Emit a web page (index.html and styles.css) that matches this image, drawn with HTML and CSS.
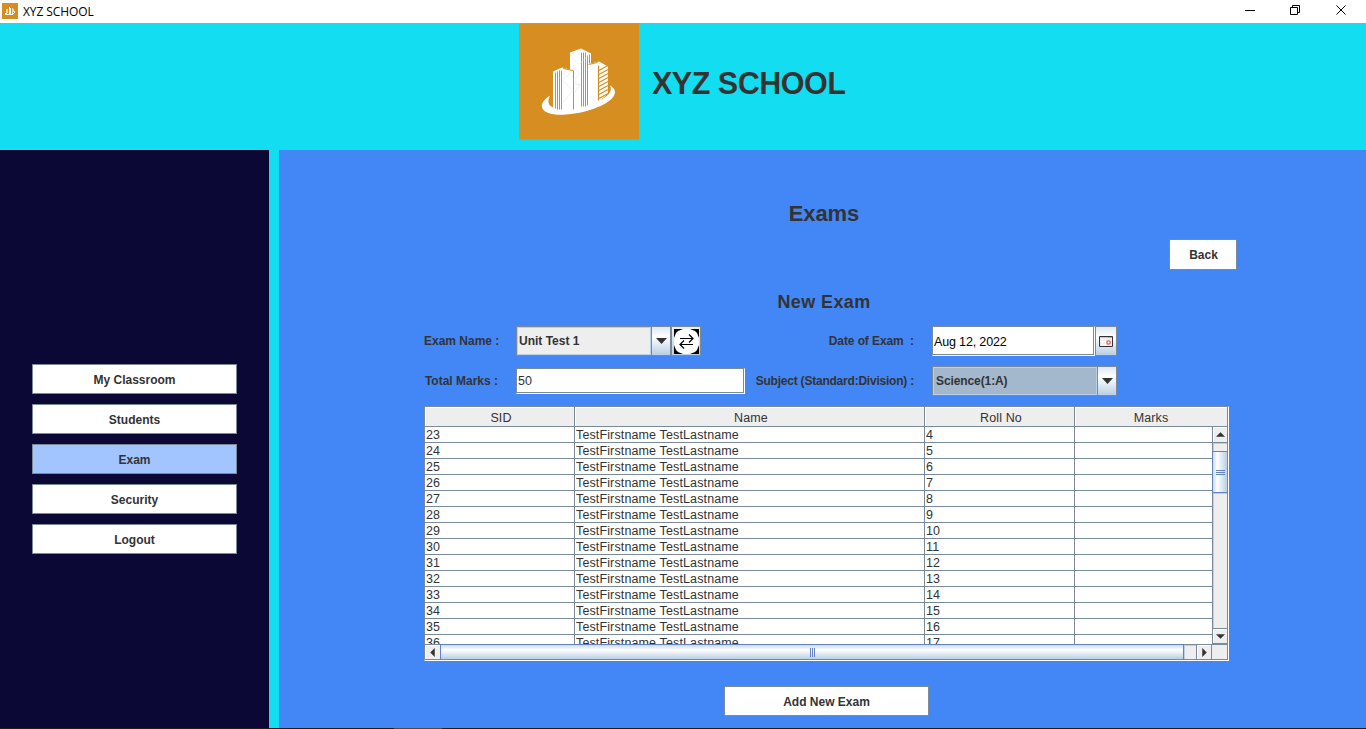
FILE: index.html
```html
<!DOCTYPE html>
<html lang="en">
<head>
<meta charset="utf-8">
<title>XYZ SCHOOL</title>
<link rel="stylesheet" href="styles.css">
</head>
<body>
<svg width="0" height="0" class="defs">
  <symbol id="skyline" viewBox="0 0 120 116">
    <rect width="120" height="116" fill="#d58e1f"/>
    <path fill="#fff" d="M34 48l9-4 8 2V29l11-4 10 5v10l8-2 9 5v27l-9 8-9 8-37 2z"/>
    <path fill="#fff" d="M31 72c-6 4-9 8-8 12 2 6 12 8 24 7 18-1 37-8 45-15 5-5 6-10-1-14 3 6-2 11-11 15-12 5-30 9-42 8-7-1-11-5-7-13z"/>
    <path fill="none" stroke="#d58e1f" stroke-width="1" d="M36.500 49v36M38.500 48v38M40.500 47v39M42.500 47v39M62.500 29v54M64.500 29v54M66.500 29v54M68.500 32v50M54.500 47v39M70.500 31v9M44 45l10 2M69.500 41l9-2"/>
    <path fill="none" stroke="#d58e1f" stroke-width="1.200" d="M79.500 42v35M80 47l9-5M80 51l9-5M80 55l9-5M80 59l9-5M80 63l9-5M80 67l9-5M80 71l9-5M80 75l9-5"/>
    <path fill="none" stroke="#e5e5e5" stroke-width=".6" d="M52 33l8 8 8-8M44 57l10 10-10 12M54 43l7 7-7 7M70 49l8-8M56 69l5-8M70 72l8 8M45 55l8-7M56 61h5M57 58v3M60 59v3"/>
  </symbol>
</svg>

<header class="titlebar">
  <svg class="app-icon" viewBox="0 0 16 16" shape-rendering="crispEdges"><rect width="16" height="16" fill="#d58e1f"/><path fill="#fff" d="M3 10h2v2H3zM7 4h1v7H7zM8 5h1v6H8zM4 11h7v1H4zM10 10h2v1h-2zM12 8h1v2h-1z"/><path fill="#f1d9ad" d="M4 6h2v4H4zM10 5h1v5h-1zM11 6h1v3h-1z"/></svg>
  <span class="app-name">XYZ SCHOOL</span>
  <svg class="window-controls" viewBox="0 0 110 23" fill="none" stroke="#000"><path d="M5 10.500h10M50.500 7.500h7v7h-7zM52.500 7.500v-2h7v7h-2"/><path d="M96.500 5.500l9 9M105.500 5.500l-9 9"/></svg>
</header>

<section class="banner">
  <svg class="logo"><use href="#skyline"/></svg>
  <h1>XYZ SCHOOL</h1>
</section>

<div class="body">
  <nav class="sidebar">
    <button class="btn">My Classroom</button>
    <button class="btn">Students</button>
    <button class="btn active">Exam</button>
    <button class="btn">Security</button>
    <button class="btn">Logout</button>
  </nav>

  <main class="main">
    <h2>Exams</h2>
    <button class="btn back">Back</button>
    <h3>New Exam</h3>

    <div class="form">
      <label>Exam Name :</label>
      <div class="field-group">
        <div class="combo exam-combo"><span>Unit Test 1</span><i class="drop"><svg viewBox="0 0 11 6"><path d="M0 0h11L5.500 6z"/></svg></i></div>
        <div class="swap"><svg viewBox="0 0 25 25"><rect width="25" height="25" fill="#000"/><path fill="#fff" d="M9 0h7l5 2 2 2 2 5v7l-2 5-2 2-5 2H9l-5-2-2-2-2-5V9l2-5 2-2z"/><path fill="none" stroke="#000" stroke-width="1.200" d="M6 9.500h13M15 5.500l4 4-4 4M19 15.500H6M10 11.500l-4 4 4 4"/></svg></div>
      </div>
      <label class="date-label">Date of Exam&nbsp; :</label>
      <div class="field-group">
        <div class="input date">Aug 12, 2022</div>
        <div class="calendar"><svg viewBox="0 0 14 11"><path fill="#eee" stroke="#333" d="M.5.500h13v10H.5z"/><path stroke="#f2c27c" d="M1 1.500h8"/><path stroke="#9cb6dc" d="M9 1.500h4"/><path stroke="#fff" d="M3.500 3v7M6.500 3v7M1 5.500h6"/><circle cx="9.500" cy="6.500" r="1.700" fill="#fff" stroke="#ec6060" stroke-width="1.300"/></svg></div>
      </div>
      <label>Total Marks :</label>
      <div class="input marks">50</div>
      <label class="subject-label">Subject (Standard:Division) :</label>
      <div class="combo subject-combo"><span>Science(1:A)</span><i class="drop"><svg viewBox="0 0 11 6"><path d="M0 0h11L5.500 6z"/></svg></i></div>
    </div>

    <div class="grid">
      <div class="row head"><span>SID</span><span>Name</span><span>Roll No</span><span>Marks</span></div>
      <div class="viewport">
        <div class="rows">
          <div class="row"><span>23</span><span>TestFirstname TestLastname</span><span>4</span><span></span></div>
          <div class="row"><span>24</span><span>TestFirstname TestLastname</span><span>5</span><span></span></div>
          <div class="row"><span>25</span><span>TestFirstname TestLastname</span><span>6</span><span></span></div>
          <div class="row"><span>26</span><span>TestFirstname TestLastname</span><span>7</span><span></span></div>
          <div class="row"><span>27</span><span>TestFirstname TestLastname</span><span>8</span><span></span></div>
          <div class="row"><span>28</span><span>TestFirstname TestLastname</span><span>9</span><span></span></div>
          <div class="row"><span>29</span><span>TestFirstname TestLastname</span><span>10</span><span></span></div>
          <div class="row"><span>30</span><span>TestFirstname TestLastname</span><span>11</span><span></span></div>
          <div class="row"><span>31</span><span>TestFirstname TestLastname</span><span>12</span><span></span></div>
          <div class="row"><span>32</span><span>TestFirstname TestLastname</span><span>13</span><span></span></div>
          <div class="row"><span>33</span><span>TestFirstname TestLastname</span><span>14</span><span></span></div>
          <div class="row"><span>34</span><span>TestFirstname TestLastname</span><span>15</span><span></span></div>
          <div class="row"><span>35</span><span>TestFirstname TestLastname</span><span>16</span><span></span></div>
          <div class="row"><span>36</span><span>TestFirstname TestLastname</span><span>17</span><span></span></div>
        </div>
        <div class="vbar">
          <div class="arrow up"><svg viewBox="0 0 8 4"><path d="M0 4h8L4 0z"/></svg></div>
          <div class="track-top"></div>
          <div class="vthumb"><i></i><i></i><i></i></div>
          <div class="track"></div>
          <div class="arrow down"><svg viewBox="0 0 8 4"><path d="M0 0h8L4 4z"/></svg></div>
        </div>
      </div>
      <div class="hbar">
        <div class="arrow left"><svg viewBox="0 0 4 8"><path d="M4 0v8L0 4z"/></svg></div>
        <div class="hthumb"><i></i><i></i><i></i></div>
        <div class="htrack"></div>
        <div class="arrow right"><svg viewBox="0 0 4 8"><path d="M0 0v8l4-4z"/></svg></div>
        <div class="corner"></div>
      </div>
    </div>

    <button class="btn add">Add New Exam</button>
  </main>
</div>
<footer class="edge"><i></i></footer>
</body>
</html>
```
FILE: styles.css
```css
* { box-sizing: border-box; }
body {
  margin: 0;
  width: 1366px;
  height: 729px;
  overflow: hidden;
  display: flex;
  flex-direction: column;
  background: #13def1;
  color: #333;
  font: bold 12px "Liberation Sans", Arial, sans-serif;
}
.defs { display: none; }
svg { display: block; flex: none; }
h1, h2, h3 { margin: 0; }

.titlebar {
  height: 23px;
  flex: none;
  display: flex;
  background: #fff;
  color: #000;
  font: 12px/23px "Open Sans", "Noto Sans", sans-serif;
}
.app-icon { width: 16px; height: 16px; margin: 3px 5px 0 2px; }
.app-name { letter-spacing: -.1px; }
.window-controls { width: 110px; height: 23px; margin: 0 16px 0 auto; }

.banner { height: 127px; flex: none; display: flex; padding-left: 519px; }
.logo { width: 120px; height: 117px; }
h1 { margin-left: 13px; font-size: 30.5px; line-height: 120px; letter-spacing: -.5px; white-space: nowrap; }

.body { height: 578px; flex: none; display: flex; gap: 10px; }
.sidebar {
  width: 269px;
  background: #0b0836;
  padding: 214px 32px 0;
  display: flex;
  flex-direction: column;
  gap: 10px;
}
.btn {
  width: 205px;
  height: 30px;
  padding: 2px 0 0;
  border: 1px solid #7a8a99;
  background: #fff;
  color: #333;
  font: inherit;
}
.active { background: #a3c5ff; }

.main {
  width: 1087px;
  background: #4387f7;
  display: flex;
  flex-direction: column;
  padding-left: 145px;
}
h2 { width: 800px; height: 25px; margin-top: 51px; text-align: center; font-size: 22px; line-height: 25px; letter-spacing: -.1px; }
.back { width: 68px; height: 31px; margin: 13px 0 0 745px; padding: 1px 0 0 1px; }
h3 { width: 800px; height: 22px; margin-top: 21px; text-align: center; font-size: 18px; line-height: 22px; letter-spacing: .4px; }

.form {
  margin-top: 13px;
  display: grid;
  grid-template-columns: 75px 246px 170px 202px;
  grid-template-rows: 30px 30px;
  row-gap: 10px;
  align-items: center;
}
.form > :nth-child(even) { margin-left: 17px; }
.form label { text-align: right; white-space: nowrap; padding-right: 1px; }
.form .subject-label { letter-spacing: -.22px; }
.form .date-label { letter-spacing: -.1px; }
.field-group { display: flex; height: 30px; }
.combo { display: flex; height: 30px; border: 1px solid #7a8a99; }
.combo span {
  flex: 1;
  border: 1px solid #b8cfe5;
  background: #eee;
  line-height: 26px;
  padding-left: 1px;
}
.drop {
  width: 19px;
  border-left: 1px solid #7a8a99;
  background: linear-gradient(#dde8f3, #fff 35%, #b8cfe5);
  display: grid;
  place-items: center;
}
.drop svg { width: 11px; height: 6px; fill: #333; }
.exam-combo { width: 155px; }
.subject-combo { width: 185px; }
.subject-combo span { background: #a3b8cc; padding-left: 2px; letter-spacing: -.1px; }
.swap { width: 30px; height: 30px; border: 1px solid #7a8a99; background: linear-gradient(#eee, #b8cfe5); padding: 2px; }
.swap svg { width: 25px; height: 25px; }
.input {
  border: 1px solid #7a8a99;
  border-right-color: #fff;
  border-bottom-color: #fff;
  background: #fff;
  box-shadow: inset -1px -1px #7a8a99;
  font-weight: normal;
  padding-left: 1px;
}
.marks { width: 229px; height: 26px; line-height: 25px; font-size: 12.5px; }
.date { width: 163px; height: 30px; line-height: 30px; color: #000; font-size: 12.5px; letter-spacing: -.15px; }
.calendar {
  width: 22px;
  height: 30px;
  border: 1px solid #7a8a99;
  background: linear-gradient(#dde8f3, #fff 35%, #b8cfe5);
  display: grid;
  place-items: center;
}
.calendar svg { width: 14px; height: 11px; }

.grid {
  width: 805px;
  height: 255px;
  margin-top: 10px;
  border: 1px solid #7a8a99;
  border-right-color: #fff;
  border-bottom-color: #fff;
  background: #fff;
  font-weight: normal;
  font-size: 12.5px;
  letter-spacing: .13px;
}
.row { display: grid; grid-template-columns: 150px 350px 150px 137px; height: 16px; flex: none; }
.row span {
  height: 16px;
  border-right: 1px solid #7a8a99;
  border-bottom: 1px solid #7a8a99;
  padding-left: 1px;
  line-height: 17px;
  white-space: nowrap;
}
.row span:last-child { border-right: 0; }
.head { height: 20px; grid-template-columns: 150px 350px 150px 153px; }
.head span {
  height: 20px;
  background: #eee;
  box-shadow: inset 1px 1px #fff;
  text-align: center;
  line-height: 22px;
  padding-left: 3px;
}
.head span:last-child { border-right: 1px solid #7a8a99; padding-left: 0; }
.viewport { display: flex; height: 217px; }
.rows { width: 787px; overflow: hidden; }
.vbar {
  width: 16px;
  border: solid #7a8a99;
  border-width: 0 1px;
  background: #eee;
  display: flex;
  flex-direction: column;
}
.arrow { background: #eee; box-shadow: inset 1px 1px #fff; display: grid; place-items: center; }
.arrow svg { fill: #333; }
.up svg, .down svg { width: 9px; height: 5px; }
.left svg, .right svg { width: 5px; height: 9px; }
.up { height: 16px; border-bottom: 1px solid #7a8a99; }
.track-top { height: 8px; box-shadow: inset 1px 1px #b8cfe5; }
.vthumb {
  height: 42px;
  margin-left: -1px;
  border: 1px solid #6382bf;
  border-right: 0;
  background: linear-gradient(90deg, #c8dbee, #fff 30%, #b8cfe5);
  display: flex;
  flex-direction: column;
  align-items: center;
  justify-content: center;
  gap: 1px;
}
.vthumb i { width: 9px; height: 1px; background: #6382bf; }
.track { flex: 1; box-shadow: inset 1px 1px #b8cfe5; }
.down { height: 16px; border: solid #7a8a99; border-width: 1px 0; }
.hbar { height: 16px; display: flex; border: solid #7a8a99; border-width: 1px 1px 1px 0; background: #eee; }
.left { width: 15px; }
.hthumb {
  width: 744px;
  margin-top: -1px;
  border: 1px solid #6382bf;
  border-bottom: 0;
  background: linear-gradient(#c8dbee, #fff 35%, #b8cfe5);
  display: flex;
  align-items: center;
  justify-content: center;
  gap: 1px;
}
.hthumb i { width: 1px; height: 9px; background: #6382bf; }
.htrack { width: 12px; box-shadow: inset 1px 1px #b8cfe5; }
.right { width: 16px; border: solid #7a8a99; border-width: 0 1px; }
.corner { flex: 1; }
.add { margin: 25px 0 0 300px; }

.edge { height: 1px; flex: none; background: #1b1f24; padding-left: 394px; }
.edge i { display: block; width: 48px; height: 1px; background: #4a4a4a; }
```
